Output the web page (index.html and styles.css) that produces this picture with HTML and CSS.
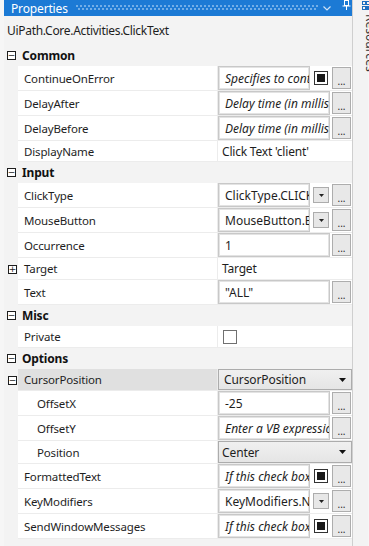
FILE: index.html
```html
<!DOCTYPE html>
<html>
<head>
<meta charset="utf-8">
<link rel="stylesheet" href="styles.css">
</head>
<body>
<div class="app">
  <div class="panel">
    <div class="titlebar">
      <span class="tb-title">Properties</span>
      <span class="tb-dots"></span>
      <svg class="tb-chev" width="8" height="5" viewBox="0 0 8 5"><polyline points="0.5,0.5 4,4 7.5,0.5" fill="none" stroke="#cfe2f6" stroke-width="1.2"/></svg>
      <svg class="tb-pin" width="9" height="10" viewBox="0 0 9 10"><rect x="2.5" y="0.5" width="4" height="5" fill="none" stroke="#ffffff"/><line x1="0.5" y1="6" x2="8.5" y2="6" stroke="#ffffff"/><line x1="4.5" y1="6" x2="4.5" y2="10" stroke="#ffffff"/></svg>
    </div>
    <div class="typename">UiPath.Core.Activities.ClickText</div>
    <div class="grid">
      <div class="row cat"><div class="g"><span class="box">−</span></div><div class="catname">Common</div></div>
      <div class="row r25"><div class="g"></div><div class="name">ContinueOnError</div><div class="val"><div class="tb ph w92">Specifies to continue executing</div><div class="cb"></div><div class="eb">...</div></div></div>
      <div class="row r25"><div class="g"></div><div class="name">DelayAfter</div><div class="val"><div class="tb ph w112">Delay time (in milliseconds)</div><div class="eb">...</div></div></div>
      <div class="row r25"><div class="g"></div><div class="name">DelayBefore</div><div class="val"><div class="tb ph w112">Delay time (in milliseconds)</div><div class="eb">...</div></div></div>
      <div class="row r21"><div class="g"></div><div class="name">DisplayName</div><div class="val"><span class="plain">Click Text 'client'</span></div></div>

      <div class="row cat"><div class="g"><span class="box">−</span></div><div class="catname">Input</div></div>
      <div class="row r25"><div class="g"></div><div class="name">ClickType</div><div class="val"><div class="tb w92">ClickType.CLICK_SINGLE</div><div class="dd"><svg width="5" height="3" viewBox="0 0 5 3"><polygon points="0,0 5,0 2.5,3" fill="#222"/></svg></div><div class="eb">...</div></div></div>
      <div class="row r25"><div class="g"></div><div class="name">MouseButton</div><div class="val"><div class="tb w92">MouseButton.BTN_LEFT</div><div class="dd"><svg width="5" height="3" viewBox="0 0 5 3"><polygon points="0,0 5,0 2.5,3" fill="#222"/></svg></div><div class="eb">...</div></div></div>
      <div class="row r25"><div class="g"></div><div class="name">Occurrence</div><div class="val"><div class="tb w112">1</div><div class="eb">...</div></div></div>
      <div class="row r22"><div class="g"><span class="box plus">+</span></div><div class="name">Target</div><div class="val"><span class="plain">Target</span></div></div>
      <div class="row r25"><div class="g"></div><div class="name">Text</div><div class="val"><div class="tb w112">"ALL"</div><div class="eb">...</div></div></div>

      <div class="row cat"><div class="g"><span class="box">−</span></div><div class="catname">Misc</div></div>
      <div class="row r22"><div class="g"></div><div class="name">Private</div><div class="val"><div class="cbe"></div></div></div>

      <div class="row cat"><div class="g"><span class="box">−</span></div><div class="catname">Options</div></div>
      <div class="row r22 sel"><div class="g"><span class="box plus">−</span></div><div class="name">CursorPosition</div><div class="val"><div class="combo">CursorPosition<svg class="arr" width="7" height="4" viewBox="0 0 7 4"><polygon points="0,0 7,0 3.5,4" fill="#111"/></svg></div></div></div>
      <div class="row r25"><div class="g"></div><div class="name sub">OffsetX</div><div class="val"><div class="tb w112">-25</div><div class="eb">...</div></div></div>
      <div class="row r25"><div class="g"></div><div class="name sub">OffsetY</div><div class="val"><div class="tb ph w112">Enter a VB expression</div><div class="eb">...</div></div></div>
      <div class="row r23"><div class="g"></div><div class="name sub">Position</div><div class="val"><div class="combo c2">Center<svg class="arr" width="7" height="4" viewBox="0 0 7 4"><polygon points="0,0 7,0 3.5,4" fill="#111"/></svg></div></div></div>
      <div class="row r25"><div class="g"></div><div class="name">FormattedText</div><div class="val"><div class="tb ph w92">If this check box is selected</div><div class="cb"></div><div class="eb">...</div></div></div>
      <div class="row r25"><div class="g"></div><div class="name">KeyModifiers</div><div class="val"><div class="tb w92">KeyModifiers.None</div><div class="dd"><svg width="5" height="3" viewBox="0 0 5 3"><polygon points="0,0 5,0 2.5,3" fill="#222"/></svg></div><div class="eb">...</div></div></div>
      <div class="row r25"><div class="g"></div><div class="name">SendWindowMessages</div><div class="val"><div class="tb ph w92">If this check box is selected</div><div class="cb"></div><div class="eb">...</div></div></div>
    </div>
  </div>
  <div class="side">
    <svg class="side-icon" width="8" height="9" viewBox="0 0 8 9"><rect x="0.5" y="0.5" width="3" height="3" fill="none" stroke="#1e6fc0"/><rect x="4.5" y="0.5" width="3" height="3" fill="none" stroke="#1e6fc0"/><rect x="0.5" y="5.5" width="3" height="3" fill="none" stroke="#1e6fc0"/><rect x="4.5" y="5.5" width="3" height="3" fill="#1e6fc0" stroke="#1e6fc0"/></svg>
    <span class="side-text">Resources</span>
  </div>
</div>
</body>
</html>
```

FILE: styles.css
```css
html, body {
  margin: 0;
  padding: 0;
}
body {
  background: #f6f6f6;
  font-family: "Noto Sans", "Open Sans", sans-serif;
  font-size: 11.5px;
  letter-spacing: -0.15px;
  color: #1e1e1e;
  width: 369px;
  height: 546px;
  overflow: hidden;
}
.app {
  display: flex;
  height: 546px;
  padding-left: 4px;
}
.panel {
  width: 348px;
  background: #f3f3f3;
  display: flex;
  flex-direction: column;
}
.titlebar {
  height: 16px;
  background: #1c7ad5;
  display: flex;
  align-items: center;
  color: #fff;
  width: 349px;
}
.tb-title {
  padding-left: 7px;
  line-height: 15px;
  font-size: 12px;
}
.tb-dots {
  margin-left: 8px;
  width: 242px;
  height: 6px;
  background-image:
    radial-gradient(circle at 1px 1px, #72aee8 0.8px, transparent 1px),
    radial-gradient(circle at 3px 4px, #72aee8 0.8px, transparent 1px);
  background-size: 4px 6px;
}
.tb-chev {
  margin-left: 5px;
}
.tb-pin {
  margin-left: 11px;
  align-self: flex-start;
}
.typename {
  height: 29px;
  line-height: 29px;
  padding-left: 3px;
  font-size: 12px;
  letter-spacing: -0.3px;
}
.grid {
  display: flex;
  flex-direction: column;
}
.row {
  display: grid;
  grid-template-columns: 14px 199px 135px;
}
.row.cat {
  grid-template-columns: 14px 334px;
  height: 21px;
}
.r25 { height: 25px; }
.r23 { height: 23px; }
.r22 { height: 22px; }
.r21 { height: 21px; }
.g {
  display: flex;
  align-items: center;
}
.box {
  box-sizing: border-box;
  width: 9px;
  height: 9px;
  border: 1px solid #1e1e1e;
  margin-left: 3px;
  font-size: 9px;
  line-height: 6px;
  display: flex;
  justify-content: center;
  font-family: "DejaVu Sans", sans-serif;
  letter-spacing: 0;
  overflow: hidden;
  background: #fff;
}
.box.plus {
  margin-left: 4px;
}
.catname {
  font-weight: bold;
  padding-left: 4px;
  display: flex;
  align-items: center;
  color: #111;
  font-size: 12px;
}
.name, .val {
  box-sizing: border-box;
  background: #fff;
  border-bottom: 1px solid #ececec;
  display: flex;
  align-items: center;
  white-space: nowrap;
  overflow: hidden;
}
.name {
  padding-left: 6px;
}
.name.sub {
  padding-left: 19px;
}
.val {
  border-left: 1px solid #ececec;
}
.sel .name {
  background: #e0e0e0;
}
.tb {
  box-sizing: border-box;
  height: 100%;
  border: 1px solid #c8c8c8;
  box-shadow: inset 0 0 0 1px #e3e3e3;
  background: #fff;
  padding: 0 2px 0 6px;
  display: flex;
  align-items: center;
  overflow: hidden;
  white-space: nowrap;
  flex: none;
  font-size: 12px;
  letter-spacing: 0;
}
.tb.ph {
  font-style: italic;
}
.w92 { width: 92px; }
.w112 { width: 112px; }
.cb {
  box-sizing: border-box;
  width: 14px;
  height: 14px;
  border: 1px solid #333;
  padding: 2px;
  margin-left: 4px;
  background: #fff;
  flex: none;
}
.cb::after {
  content: "";
  display: block;
  width: 8px;
  height: 8px;
  background: #1a1a1a;
}
.dd {
  box-sizing: border-box;
  width: 16px;
  height: 16px;
  border: 1px solid #acacac;
  background: #e7e7e7;
  margin-left: 3px;
  display: flex;
  align-items: center;
  justify-content: center;
  flex: none;
}
.eb {
  box-sizing: border-box;
  width: 19px;
  height: 22px;
  border: 1px solid #adadad;
  background: #e8e8e8;
  margin-left: auto;
  margin-right: 1px;
  display: flex;
  justify-content: center;
  align-items: flex-end;
  font-size: 10px;
  letter-spacing: 0;
  line-height: 12px;
  color: #2a2a2a;
  flex: none;
  padding-bottom: 1px;
}
.plain {
  padding-left: 4px;
  font-size: 12px;
  letter-spacing: -0.2px;
}
.cbe {
  box-sizing: border-box;
  width: 14px;
  height: 14px;
  border: 1px solid #707070;
  background: #fff;
  margin-left: 5px;
}
.combo {
  box-sizing: border-box;
  width: 134px;
  height: 21px;
  border: 1px solid #acacac;
  background: linear-gradient(#f0f0f0, #e5e5e5);
  display: flex;
  align-items: center;
  padding-left: 5px;
  padding-right: 5px;
  font-size: 12px;
  letter-spacing: -0.1px;
}
.combo.c2 {
  height: 22px;
  padding-left: 3px;
}
.combo .arr {
  margin-left: auto;
}
.r22.sel .val, .r23 .val {
  align-items: flex-start;
}
.side {
  width: 16px;
  border-left: 1px solid #cfcfcf;
  background: #f3f3f3;
  display: flex;
  flex-direction: column;
  align-items: flex-start;
  padding-left: 9px;
  box-sizing: border-box;
  flex: none;
  overflow: visible;
}
.side-icon {
  margin-top: 1px;
  flex: none;
}
.side-text {
  writing-mode: vertical-rl;
  margin-top: 4px;
  font-size: 12px;
  letter-spacing: 0;
  color: #333;
  white-space: nowrap;
  flex: none;
}
```
